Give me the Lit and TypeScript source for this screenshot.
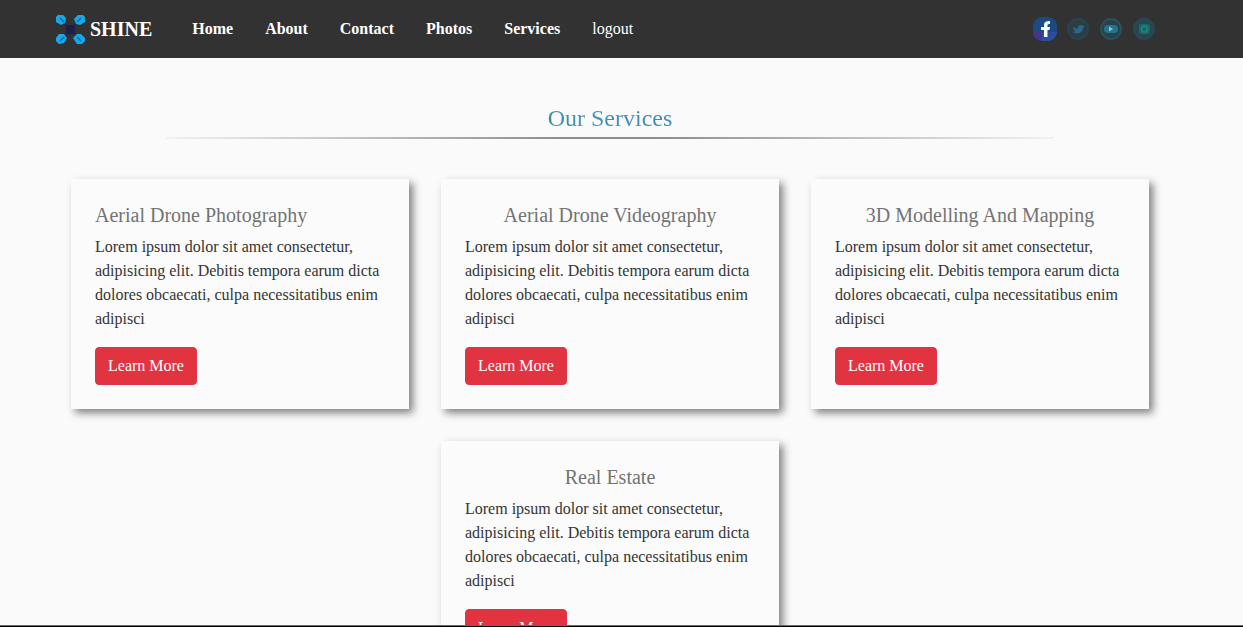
import { LitElement, html, css, svg } from "lit";
import { customElement } from "lit/decorators.js";

interface Service {
  title: string;
  align: "start" | "center";
}

const services: Service[] = [
  { title: "Aerial Drone Photography", align: "start" },
  { title: "Aerial Drone Videography", align: "center" },
  { title: "3D Modelling And Mapping", align: "center" },
  { title: "Real Estate", align: "center" },
];

const links = ["Home", "About", "Contact", "Photos", "Services"];

const facebook = svg`
  <rect x="1" y="2" width="24" height="24" rx="9" fill="#1d4a80"/>
  <path d="M1 17h9v9a9 9 0 0 1-9-9z" fill="#46338c"/>
  <path d="M10 17h15a9 9 0 0 1-9 9h-6z" fill="#2b4d9c"/>
  <path d="M12 22v-7H9v-3h3v-2c0-3 2-4 6-4v3c-2 0-2.500 .5-2.500 1.500V12H18l-.5 3h-2v7z" fill="#f2fbff"/>`;
const twitter = svg`
  <circle cx="13" cy="14" r="10" fill="#2d3d40" stroke="#27444f" stroke-width="2"/>
  <path d="M8 12c2 1 4 2 5 1 0-3 3-4 5-2h2l-2 2c0 5-6 7-10 4l3-1c-2 0-3-2-3-4z" fill="#28678e"/>`;
const youtube = svg`
  <circle cx="13" cy="14" r="10" fill="#294249" stroke="#28515a" stroke-width="2"/>
  <rect x="6" y="10" width="14" height="8" rx="4" fill="#24738f"/>
  <path d="M11 11.500l4 2.500-4 2.500z" fill="#8fc5cf"/>`;
const instagram = svg`
  <circle cx="13" cy="14" r="10" fill="#294650" stroke="#2b4654" stroke-width="2"/>
  <rect x="8" y="9" width="11" height="10" rx="2" fill="#146b66"/>
  <circle cx="13.500" cy="14" r="3" fill="none" stroke="#23857f" stroke-width="1.500"/>`;

const socials = [
  { name: "Facebook", icon: facebook },
  { name: "Twitter", icon: twitter },
  { name: "YouTube", icon: youtube },
  { name: "Instagram", icon: instagram },
];

@customElement("service-card")
export class ServiceCard extends LitElement {
  static properties = { heading: { type: String }, align: { type: String } };
  declare heading: string;
  declare align: string;

  static styles = css`
    :host {
      display: block;
    }
    .card {
      box-sizing: border-box;
      padding: 24px;
      background: #fbfbfb;
      box-shadow: 4px 4px 8px #808080, -1px -1px 4px #ffffff;
    }
    .title {
      margin: 0 0 8px;
      font-size: 20px;
      line-height: 24px;
      font-weight: 400;
      color: #737373;
      text-align: center;
    }
    .title.start {
      text-align: left;
    }
    .text {
      margin: 0 0 16px;
      font-size: 16px;
      line-height: 24px;
      color: #343434;
    }
    .more {
      display: block;
      padding: 6px 12px;
      border: 1px solid #dc3545;
      border-radius: 4px;
      background: #e23340;
      color: #fff;
      font: inherit;
      font-size: 16px;
      line-height: 24px;
      cursor: pointer;
    }
  `;

  render() {
    return html`
      <article class="card">
        <h2 class="title ${this.align}">${this.heading}</h2>
        <p class="text">
          Lorem ipsum dolor sit amet consectetur, adipisicing elit. Debitis tempora earum dicta
          dolores obcaecati, culpa necessitatibus enim adipisci
        </p>
        <button class="more" type="button">Learn More</button>
      </article>
    `;
  }
}

@customElement("app-root")
export class AppRoot extends LitElement {
  static styles = css`
    :host {
      display: flex;
      flex-direction: column;
      height: 100vh;
      overflow: hidden;
      background: #fafafa;
      font-family: "Liberation Serif", "Times New Roman", serif;
      font-size: 16px;
      line-height: 24px;
    }
    .bar {
      flex: none;
      padding-right: 23px;
      background: #323232;
    }
    .container {
      box-sizing: border-box;
      max-width: 1140px;
      margin: 0 auto;
      padding: 0 15px;
    }
    .nav {
      display: flex;
      align-items: center;
      height: 58px;
    }
    a {
      color: #fff;
      text-decoration: none;
    }
    .brand {
      display: flex;
      align-items: center;
      gap: 4px;
      margin-right: 24px;
      font-size: 20px;
      font-weight: 700;
    }
    .logo {
      width: 31px;
      height: 32px;
    }
    .links {
      display: flex;
      flex: 1;
      margin: 0;
      padding: 0;
      list-style: none;
      font-weight: 700;
    }
    .link {
      display: block;
      padding: 8px 16px;
    }
    .plain {
      font-weight: 400;
    }
    .socials {
      display: flex;
      gap: 5px;
      margin-right: 6px;
    }
    .social {
      display: block;
      width: 28px;
      height: 28px;
    }
    .main {
      flex: 1;
      min-height: 0;
      overflow: hidden;
      padding: 46px 23px 0 0;
    }
    .heading {
      margin: 0;
      font-size: 24px;
      line-height: 29px;
      font-weight: 400;
      text-align: center;
    }
    .tint {
      background: linear-gradient(90deg, #3d8d9c, #3f93c4 30%, #4389b5);
      background-clip: text;
      -webkit-background-clip: text;
      color: transparent;
    }
    .rule {
      width: 80%;
      height: 2px;
      margin: 4px auto 40px;
      border: 0;
      background: linear-gradient(90deg, #f2f2f2, #8c8c8c 45%, #8c8c8c 55%, #f2f2f2);
    }
    .grid {
      display: flex;
      flex-wrap: wrap;
      justify-content: center;
      row-gap: 32px;
    }
    .cell {
      box-sizing: border-box;
      flex: 0 0 calc(100% / 3);
      padding: 0 16px;
    }
    .edge {
      flex: none;
      height: 2px;
      background: linear-gradient(#6b6b6b 50%, #000 50%);
    }
  `;

  render() {
    return html`
      <header class="bar">
        <nav class="container nav">
          <a class="brand" href="#">
            <svg class="logo" viewBox="0 0 31 32" aria-hidden="true">
              <path d="M7 8l17 17M24 8L7 25" stroke="#202b52" stroke-width="3" />
              <rect x="11" y="12" width="9" height="9" rx="3" fill="#1c2046" />
              <g fill="#16a9ea">
                <path d="M3 2h5l3 3-1 5-4 2-5-3V4z" />
                <path d="M28 2h-5l-4 4 2 5 4 1 5-3V4z" />
                <path d="M1 25l3-4h5l3 4-3 5-5 1-3-3z" />
                <path d="M30 25l-4-4h-4l-4 4 4 6 5 0 3-3z" />
              </g>
              <path
                d="M5 5l4 4M26 5l-4 4M5 28l4-4M26 28l-4-4"
                stroke="#1668a7"
                stroke-width="1.500"
              />
            </svg>
            SHINE
          </a>
          <ul class="links">
            ${links.map((l) => html`<li><a class="link" href="#">${l}</a></li>`)}
            <li><a class="link plain" href="#">logout</a></li>
          </ul>
          <div class="socials">
            ${socials.map(
              (s) => html`<a class="social" href="#" aria-label=${s.name}>
                <svg viewBox="0 0 28 28" width="28" height="28" aria-hidden="true">${s.icon}</svg>
              </a>`
            )}
          </div>
        </nav>
      </header>
      <main class="main">
        <div class="container">
          <h1 class="heading"><span class="tint">Our Services</span></h1>
          <hr class="rule" />
          <section class="grid">
            ${services.map(
              (s) => html`<service-card class="cell" .heading=${s.title} .align=${s.align}></service-card>`
            )}
          </section>
        </div>
      </main>
      <footer class="edge"></footer>
    `;
  }
}
